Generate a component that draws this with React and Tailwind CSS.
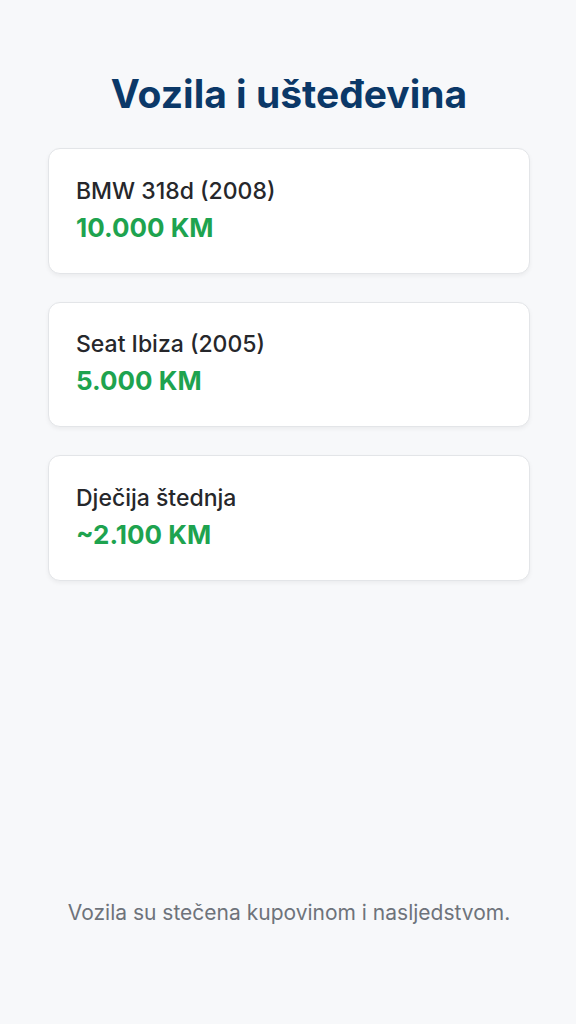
const items = [
  { name: "BMW 318d (2008)", amount: "10.000 KM" },
  { name: "Seat Ibiza (2005)", amount: "5.000 KM" },
  { name: "Dječija štednja", amount: "~2.100 KM" },
]

export default function App() {
  return (
    <div
      className="min-h-screen flex flex-col bg-[#f7f8fa] pl-12 pr-[46px] pt-[70px] pb-[96px]"
      style={{ fontFamily: "Inter, 'Noto Sans', sans-serif" }}
    >
      <h1 className="text-center text-[39px] leading-[48px] font-bold text-[#0b3868] mb-[30px]">
        Vozila i ušteđevina
      </h1>

      <div className="flex flex-col gap-[28px]">
        {items.map((item) => (
          <div
            key={item.name}
            className="rounded-xl border border-[#e3e5e8] bg-white px-[27px] py-[25.75px] shadow-[0_2px_4px_rgba(0,0,0,0.05)]"
          >
            <p className="text-[23px] leading-[33px] font-medium text-[#26272b]">{item.name}</p>
            <p className="text-[26px] leading-[39px] font-bold text-[#1ea34f]">{item.amount}</p>
          </div>
        ))}
      </div>

      <p className="mt-auto text-center text-[21px] leading-[30px] text-[#6e737b]">
        Vozila su stečena kupovinom i nasljedstvom.
      </p>
    </div>
  )
}
